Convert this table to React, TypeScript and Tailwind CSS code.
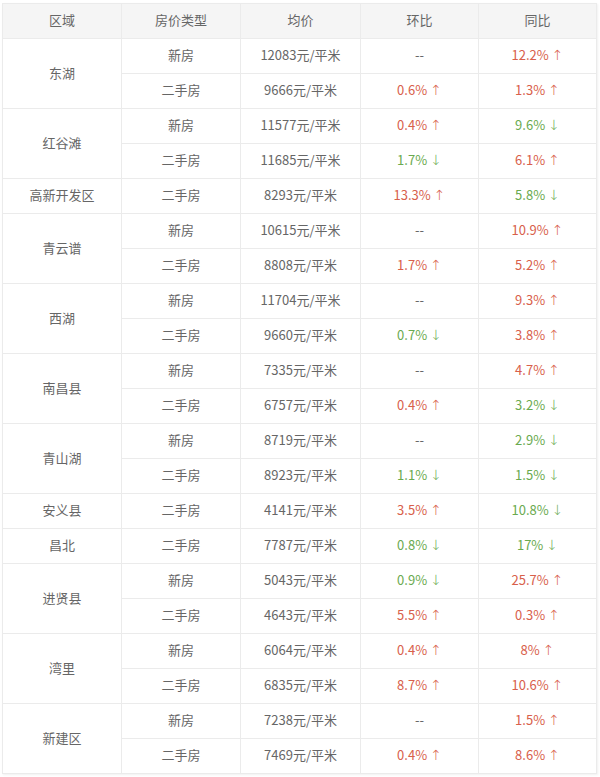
type Change = { v: string; up: boolean } | null;

interface Row {
  type: string;
  price: string;
  mom: Change;
  yoy: Change;
}

interface Area {
  name: string;
  rows: Row[];
}

const u = (v: string): Change => ({ v, up: true });
const d = (v: string): Change => ({ v, up: false });

const areas: Area[] = [
  { name: "东湖", rows: [
    { type: "新房", price: "12083", mom: null, yoy: u("12.2%") },
    { type: "二手房", price: "9666", mom: u("0.6%"), yoy: u("1.3%") },
  ] },
  { name: "红谷滩", rows: [
    { type: "新房", price: "11577", mom: u("0.4%"), yoy: d("9.6%") },
    { type: "二手房", price: "11685", mom: d("1.7%"), yoy: u("6.1%") },
  ] },
  { name: "高新开发区", rows: [
    { type: "二手房", price: "8293", mom: u("13.3%"), yoy: d("5.8%") },
  ] },
  { name: "青云谱", rows: [
    { type: "新房", price: "10615", mom: null, yoy: u("10.9%") },
    { type: "二手房", price: "8808", mom: u("1.7%"), yoy: u("5.2%") },
  ] },
  { name: "西湖", rows: [
    { type: "新房", price: "11704", mom: null, yoy: u("9.3%") },
    { type: "二手房", price: "9660", mom: d("0.7%"), yoy: u("3.8%") },
  ] },
  { name: "南昌县", rows: [
    { type: "新房", price: "7335", mom: null, yoy: u("4.7%") },
    { type: "二手房", price: "6757", mom: u("0.4%"), yoy: d("3.2%") },
  ] },
  { name: "青山湖", rows: [
    { type: "新房", price: "8719", mom: null, yoy: d("2.9%") },
    { type: "二手房", price: "8923", mom: d("1.1%"), yoy: d("1.5%") },
  ] },
  { name: "安义县", rows: [
    { type: "二手房", price: "4141", mom: u("3.5%"), yoy: d("10.8%") },
  ] },
  { name: "昌北", rows: [
    { type: "二手房", price: "7787", mom: d("0.8%"), yoy: d("17%") },
  ] },
  { name: "进贤县", rows: [
    { type: "新房", price: "5043", mom: d("0.9%"), yoy: u("25.7%") },
    { type: "二手房", price: "4643", mom: u("5.5%"), yoy: u("0.3%") },
  ] },
  { name: "湾里", rows: [
    { type: "新房", price: "6064", mom: u("0.4%"), yoy: u("8%") },
    { type: "二手房", price: "6835", mom: u("8.7%"), yoy: u("10.6%") },
  ] },
  { name: "新建区", rows: [
    { type: "新房", price: "7238", mom: null, yoy: u("1.5%") },
    { type: "二手房", price: "7469", mom: u("0.4%"), yoy: u("8.6%") },
  ] },
];

const cell = "h-[35px] p-0 pb-[2px] border border-[#ebebeb] text-center align-middle";

function ChangeCell({ c }: { c: Change }) {
  if (!c) return <td className={cell}>--</td>;
  return (
    <td className={`${cell} ${c.up ? "text-[#d8604b]" : "text-[#6aaa4f]"}`}>
      {c.v}
      <span className="ml-[3px] font-['DejaVu_Sans',sans-serif] font-light text-[14px]">{c.up ? "↑" : "↓"}</span>
    </td>
  );
}

export default function App() {
  return (
    <div className="w-[600px] h-[777px] bg-white pt-[3px] pl-[2px]" style={{ fontFamily: '"Noto Sans CJK SC", "Open Sans", sans-serif' }}>
      <table className="border-collapse text-[13px] text-[#666] table-fixed w-[594px] shadow-[1px_1px_2px_rgba(0,0,0,0.06)]">
        <colgroup>
          <col className="w-[119px]" />
          <col className="w-[119px]" />
          <col className="w-[120px]" />
          <col className="w-[118px]" />
          <col className="w-[118px]" />
        </colgroup>
        <thead>
          <tr className="bg-[#f5f5f5]">
            <th className={`${cell} font-normal`}>区域</th>
            <th className={`${cell} font-normal`}>房价类型</th>
            <th className={`${cell} font-normal`}>均价</th>
            <th className={`${cell} font-normal`}>环比</th>
            <th className={`${cell} font-normal`}>同比</th>
          </tr>
        </thead>
        <tbody>
          {areas.map((a) =>
            a.rows.map((r, i) => (
              <tr key={a.name + r.type}>
                {i === 0 && (
                  <td className={cell} rowSpan={a.rows.length}>{a.name}</td>
                )}
                <td className={cell}>{r.type}</td>
                <td className={cell}>{r.price}元/平米</td>
                <ChangeCell c={r.mom} />
                <ChangeCell c={r.yoy} />
              </tr>
            ))
          )}
        </tbody>
      </table>
    </div>
  );
}
